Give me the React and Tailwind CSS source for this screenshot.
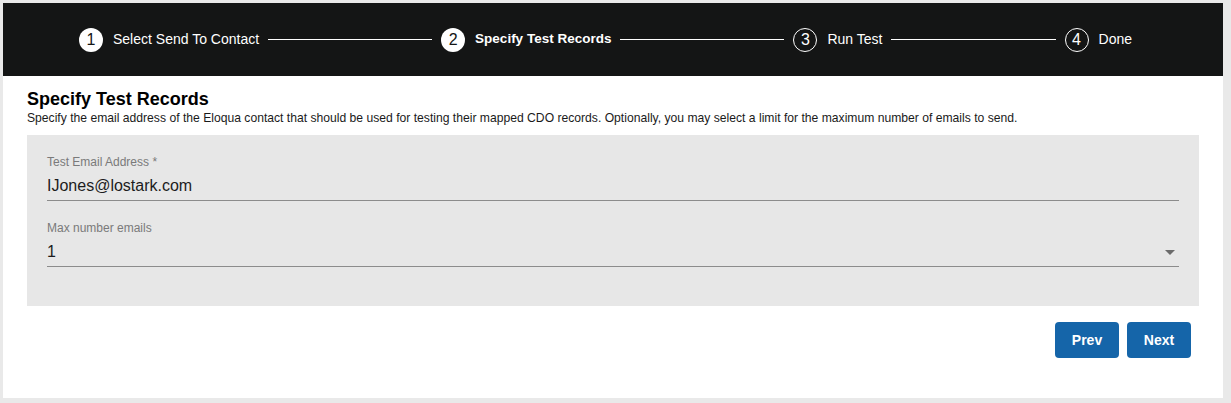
import { Fragment } from "react";

const steps = [
    { n: 1, label: "Select Send To Contact", state: "done" },
    { n: 2, label: "Specify Test Records", state: "active" },
    { n: 3, label: "Run Test", state: "todo" },
    { n: 4, label: "Done", state: "todo" },
];

function StepIcon({ n, state }) {
    if (state === "todo") {
        return (
            <div className="w-[24px] h-[24px] rounded-full border-[1.5px] border-white text-white flex items-center justify-center text-[16px] leading-none shrink-0">
                {n}
            </div>
        );
    }
    return (
        <div className="w-[24px] h-[24px] rounded-full bg-white text-[#141515] flex items-center justify-center text-[16px] leading-none shrink-0">
            {n}
        </div>
    );
}

function Field({ label, value, select }) {
    return (
        <div>
            <div className="text-[12px] leading-[14px] text-[#7a7a7a]">{label}</div>
            <div className="mt-[7px] flex items-center justify-between border-b border-[#8c8c8c] pb-[4px]">
                <span className="text-[16px] leading-[20px] text-[#1c1c1c]">{value}</span>
                {select && (
                    <svg width="10" height="5" viewBox="0 0 10 5" className="mr-[4px] mt-[1px]">
                        <path d="M0 0 L10 0 L5 5 Z" fill="#6b6b6b" />
                    </svg>
                )}
            </div>
        </div>
    );
}

export default function App() {
    return (
        <div className="min-h-screen bg-[#e9e9e9] pt-[3px] pl-[3px] pr-[8px] pb-[5px] font-['Liberation_Sans',Arial,sans-serif]">
            <div className="h-[395px] bg-white flex flex-col">
                {/* stepper */}
                <div className="h-[73px] bg-[#141515] flex items-center pl-[76px] pr-[91px]">
                    {steps.map((s, i) => (
                        <Fragment key={s.n}>
                            <div className="flex items-center shrink-0">
                                <StepIcon n={s.n} state={s.state} />
                                <span
                                    className={`ml-[10px] text-white whitespace-nowrap ${
                                        s.state === "active" ? "font-bold text-[13.5px]" : "text-[14px]"
                                    }`}
                                >
                                    {s.label}
                                </span>
                            </div>
                            {i < steps.length - 1 && <div className="flex-1 h-px bg-white mx-[9px]" />}
                        </Fragment>
                    ))}
                </div>

                <div className="px-6 pt-3">
                    <h1 className="text-[18px] leading-[22px] font-bold text-black">Specify Test Records</h1>
                    <p className="text-[12.15px] leading-[16px] text-[#1a1a1a]">
                        Specify the email address of the Eloqua contact that should be used for testing their mapped CDO records. Optionally, you may select a limit for the maximum number of emails to send.
                    </p>

                    <div className="mt-[9px] bg-[#e7e7e7] px-5 pt-5 pb-[39px] flex flex-col gap-5">
                        <Field label="Test Email Address *" value="IJones@lostark.com" />
                        <Field label="Max number emails" value="1" select />
                    </div>

                    <div className="mt-4 flex justify-end gap-2 pr-2">
                        <button className="w-[64px] h-[36px] rounded-[4px] bg-[#1565a9] text-white font-bold text-[14px]">
                            Prev
                        </button>
                        <button className="w-[64px] h-[36px] rounded-[4px] bg-[#1565a9] text-white font-bold text-[14px]">
                            Next
                        </button>
                    </div>
                </div>
            </div>
        </div>
    );
}
